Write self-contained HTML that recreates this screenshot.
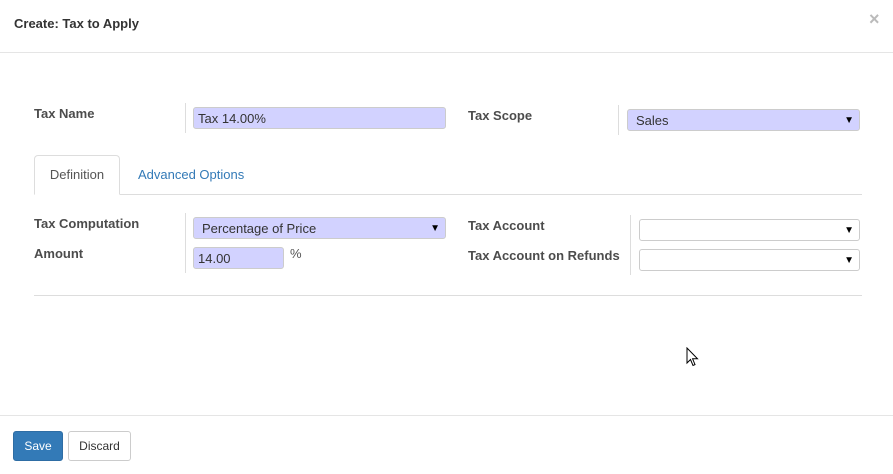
<!DOCTYPE html>
<html><head><style>
body{margin:0;width:893px;height:474px;background:#fff;font-family:"Liberation Sans",sans-serif;font-size:13px;color:#333;position:relative;overflow:hidden}
.a{position:absolute}
.lbl{position:absolute;font-weight:bold;color:#4c4c4c;font-size:13px}
.vl{position:absolute;width:1px;background:#ddd}
.in{position:absolute;box-sizing:border-box;border:1px solid #ccc;border-radius:3px;height:22px;line-height:21px;padding-left:4px;font-size:13px;color:#333}
.blue{background:#d2d2ff}
.arr{position:absolute;right:5px;top:0;font-size:10px;color:#000}
</style></head><body>
<div class="a" style="left:14px;top:16px;font-weight:bold;font-size:13px;color:#333">Create: Tax to Apply</div>
<div class="a" style="left:869px;top:9px;font-size:18px;color:#bbb;font-weight:bold">×</div>
<div class="a" style="left:0;top:52px;width:893px;height:1px;background:#e5e5e5"></div>

<div class="lbl" style="left:34px;top:106px">Tax Name</div>
<div class="vl" style="left:185px;top:103px;height:30px"></div>
<div class="in blue" style="left:193px;top:107px;width:253px">Tax 14.00%</div>

<div class="lbl" style="left:468px;top:108px">Tax Scope</div>
<div class="vl" style="left:618px;top:105px;height:30px"></div>
<div class="in blue" style="left:627px;top:109px;width:233px;padding-left:8px">Sales<span class="arr">▼</span></div>

<div class="a" style="left:34px;top:194px;width:828px;height:1px;background:#ddd"></div>
<div class="a" style="left:34px;top:155px;width:86px;height:40px;box-sizing:border-box;border:1px solid #ddd;border-bottom:1px solid #fff;border-radius:4px 4px 0 0;background:#fff;text-align:center;line-height:38px;color:#555">Definition</div>
<div class="a" style="left:138px;top:167px;color:#337ab7">Advanced Options</div>

<div class="lbl" style="left:34px;top:216px">Tax Computation</div>
<div class="lbl" style="left:34px;top:246px">Amount</div>
<div class="vl" style="left:185px;top:213px;height:60px"></div>
<div class="in blue" style="left:193px;top:217px;width:253px;padding-left:8px">Percentage of Price<span class="arr">▼</span></div>
<div class="in blue" style="left:193px;top:247px;width:91px">14.00</div>
<div class="a" style="left:290px;top:246px;color:#555">%</div>

<div class="lbl" style="left:468px;top:218px">Tax Account</div>
<div class="lbl" style="left:468px;top:248px">Tax Account on Refunds</div>
<div class="vl" style="left:630px;top:215px;height:60px"></div>
<div class="in" style="left:639px;top:219px;width:221px"><span class="arr">▼</span></div>
<div class="in" style="left:639px;top:249px;width:221px"><span class="arr">▼</span></div>

<div class="a" style="left:34px;top:295px;width:828px;height:1px;background:#ddd"></div>

<svg class="a" style="left:686px;top:347px" width="14" height="22" viewBox="0 0 14 22"><path d="M1 1 L1 16 L4.5 12.5 L7 18.5 L9 17.6 L6.6 11.8 L11.5 11.8 Z" fill="#fff" stroke="#000" stroke-width="1"/></svg>

<div class="a" style="left:0;top:415px;width:893px;height:1px;background:#e5e5e5"></div>
<div class="a" style="left:13px;top:431px;width:50px;height:30px;box-sizing:border-box;background:#337ab7;border:1px solid #2e6da4;border-radius:3px;color:#fff;font-size:12px;text-align:center;line-height:28px">Save</div>
<div class="a" style="left:68px;top:431px;width:63px;height:30px;box-sizing:border-box;background:#fff;border:1px solid #ccc;border-radius:3px;color:#333;font-size:12px;text-align:center;line-height:28px">Discard</div>
</body></html>
